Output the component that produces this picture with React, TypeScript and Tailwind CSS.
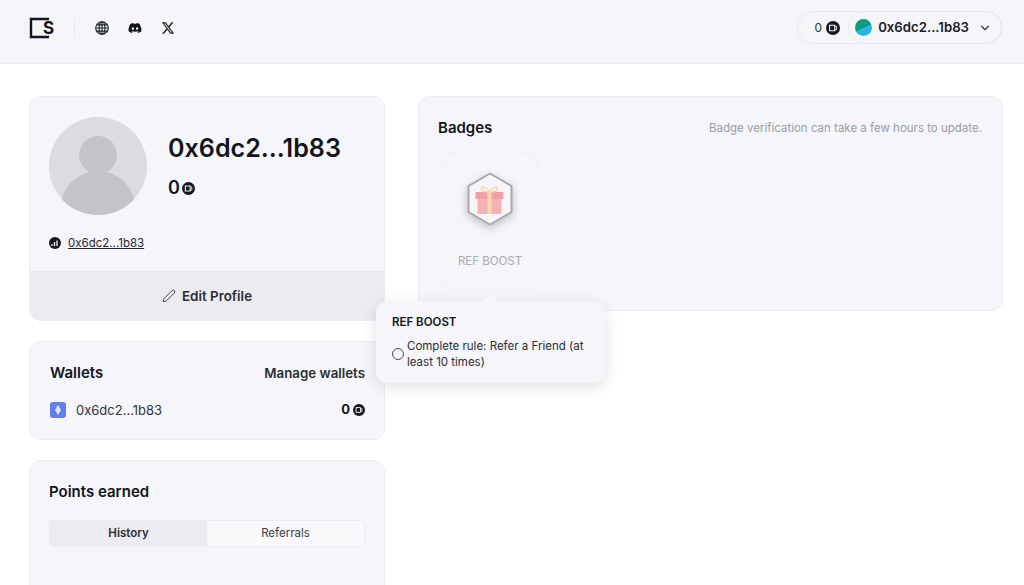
import { Pen, ChevronDown } from 'lucide-react';
import { FaDiscord } from 'react-icons/fa';
import { FaXTwitter } from 'react-icons/fa6';

function PointsIcon({ size = 14 }: { size?: number }) {
    return (
        <svg width={size} height={size} viewBox="0 0 14 14" className="shrink-0">
            <circle cx="7" cy="7" r="7" fill="#16181c" />
            <path d="M3.6 4.2h5.2v5.6H3.6z" fill="none" stroke="#f5f5fa" strokeWidth="1.1" />
            <path d="M8.8 5.4h1.8v3.2H8.8" fill="none" stroke="#f5f5fa" strokeWidth="0.9" />
        </svg>
    );
}

function GlobeIcon() {
    return (
        <svg width="14" height="14" viewBox="0 0 14 14" fill="none" stroke="#1d2125" strokeWidth="1.1">
            <circle cx="7" cy="7" r="6.300" />
            <ellipse cx="7" cy="7" rx="2.900" ry="6.300" />
            <path d="M7 .7v12.600M.7 7h12.600M1.600 3.900h10.800M1.600 10.100h10.800" />
        </svg>
    );
}

function BadgeGraphic() {
    return (
        <svg width="50" height="54" viewBox="0 0 50 54" className="drop-shadow-[0_3px_4px_rgba(0,0,0,0.22)]">
            <path
                d="M25 1.5 46.5 14v26L25 52.5 3.500 40V14z"
                fill="#f6f6fa"
                stroke="#a9a9ad"
                strokeWidth="2"
                strokeLinejoin="round"
            />
            <rect x="10.500" y="20" width="28" height="7" rx="1" fill="#f0a0a4" />
            <rect x="12.500" y="27" width="24" height="15" rx="1" fill="#f4b2b5" />
            <rect x="22.500" y="20" width="4" height="22" fill="#f8d8ac" />
            <path d="M24.500 20c-3-5-7-6-8-4s3 4 8 4zm0 0c3-5 7-6 8-4s-3 4-8 4z" fill="none" stroke="#f7d6a6" strokeWidth="1.500" />
        </svg>
    );
}

export default function App() {
    return (
        <div className="h-[585px] overflow-hidden bg-white font-['Inter',sans-serif] text-[#11151a]">
            <header className="h-16 bg-[#f5f5fa] border-b border-[#ecedf2] flex items-center justify-between pl-[29px] pr-[21px] pb-[8px]">
                <div className="flex items-center">
                    <div className="relative w-[25px] h-[22px]">
                        <svg width="25" height="22" viewBox="0 0 25 22" className="block">
                            <path d="M20 2H2v18h18" fill="none" stroke="#11151a" strokeWidth="2.400" />
                        </svg>
                        <span className="absolute left-[14px] top-[1px] text-[17px] leading-[20px] font-bold">S</span>
                    </div>
                    <div className="w-px h-4 bg-[#e6e7ec] ml-[20px] mr-[20px]" />
                    <div className="flex items-center gap-[19px]">
                        <GlobeIcon />
                        <FaDiscord size={14} color="#11151a" />
                        <FaXTwitter size={14} color="#1d2125" />
                    </div>
                </div>
                <div className="flex items-center h-[33px] rounded-full border border-[#e9eaf0]">
                    <div className="flex items-center gap-1 pl-[17px] pr-[8px] text-[12px] text-[#30343a]">
                        <span>0</span>
                        <PointsIcon />
                    </div>
                    <div className="flex items-center h-[33px] rounded-full border border-[#e9eaf0] pl-[6px] pr-[9px]">
                        <span className="w-[17px] h-[17px] rounded-full bg-[linear-gradient(155deg,#119a7c_50%,#25b8dc_52%)]" />
                        <span className="ml-[6px] text-[13.200px] font-semibold text-[#1d2125]">0x6dc2...1b83</span>
                        <ChevronDown size={14} className="ml-[9px] text-[#30343a]" />
                    </div>
                </div>
            </header>

            <main className="relative flex gap-[33px] pl-[29px] pr-[21px] pt-[32px]">
                <div className="w-[356px] shrink-0 flex flex-col gap-5">
                    <section className="rounded-xl bg-[#f5f5fa] border border-[#ecedf2] overflow-hidden">
                        <div className="px-[19px] pt-5 h-[174px]">
                            <div className="flex gap-[21px]">
                                <div className="w-[98px] h-[98px] rounded-full bg-[#dcdce0] overflow-hidden shrink-0">
                                    <svg width="98" height="98" viewBox="0 0 98 98">
                                        <circle cx="49" cy="38" r="19" fill="#c4c4c8" />
                                        <ellipse cx="49" cy="90" rx="37" ry="36" fill="#c4c4c8" />
                                    </svg>
                                </div>
                                <div className="pt-[13px]">
                                    <div className="text-[25.100px] leading-[36px] font-semibold">0x6dc2...1b83</div>
                                    <div className="mt-[12px] flex items-center gap-[2px] text-[18px] leading-[20px] font-semibold">
                                        <span>0</span>
                                        <PointsIcon size={13} />
                                    </div>
                                </div>
                            </div>
                            <div className="mt-[20px] flex items-center gap-[7px]">
                                <svg width="12" height="12" viewBox="0 0 12 12" className="shrink-0">
                                    <circle cx="6" cy="6" r="6" fill="#16181c" />
                                    <path d="M3 9V7M5.500 9V5M8 9V3.500" stroke="#f5f5fa" strokeWidth="1.300" />
                                </svg>
                                <span className="text-[11.500px] leading-4 underline text-[#24282d]">0x6dc2...1b83</span>
                            </div>
                        </div>
                        <div className="h-[49px] bg-[#ebebf0] border-t border-[#e4e4ea] flex items-center justify-center gap-[6px] text-[#2a2e33]">
                            <Pen size={14} strokeWidth={1.500} />
                            <span className="text-[13.400px] font-semibold">Edit Profile</span>
                        </div>
                    </section>

                    <section className="h-[99px] rounded-xl bg-[#f5f5fa] border border-[#ecedf2] pl-5 pr-[19px] pt-[21px]">
                        <div className="flex items-center justify-between">
                            <h2 className="text-[15px] leading-5 font-semibold">Wallets</h2>
                            <span className="text-[13.300px] leading-5 font-semibold text-[#2a2e33]">Manage wallets</span>
                        </div>
                        <div className="mt-[17px] flex items-center justify-between">
                            <div className="flex items-center gap-[10px]">
                                <div className="w-4 h-4 rounded-[3px] bg-[#627eea] flex items-center justify-center">
                                    <svg width="6" height="10" viewBox="0 0 6 10">
                                        <path d="M3 0 6 5 3 10 0 5z" fill="#dfe4fb" />
                                    </svg>
                                </div>
                                <span className="text-[13px] leading-5 text-[#30343a]">0x6dc2...1b83</span>
                            </div>
                            <div className="flex items-center gap-[3px] text-[13px] font-bold">
                                <span>0</span>
                                <PointsIcon size={12} />
                            </div>
                        </div>
                    </section>

                    <section className="h-[200px] rounded-xl bg-[#f5f5fa] border border-[#ecedf2] px-[19px] pt-[21px]">
                        <h2 className="text-[15px] leading-5 font-semibold">Points earned</h2>
                        <div className="mt-[18px] grid grid-cols-2 h-[27px] rounded-[3px] border border-[#ecedf2] overflow-hidden text-[11.500px]">
                            <div className="bg-[#ebebf0] flex items-center justify-center font-semibold text-[#2a2e33]">History</div>
                            <div className="bg-[#f9f9fc] flex items-center justify-center text-[#3a3e44]">Referrals</div>
                        </div>
                    </section>
                </div>

                <section className="flex-1 h-[215px] rounded-xl bg-[#f5f5fa] border border-[#ecedf2] pl-[19px] pr-5 pt-[21px]">
                    <div className="flex items-center justify-between">
                        <h2 className="text-[15px] leading-5 font-semibold">Badges</h2>
                        <span className="text-[11.500px] leading-5 text-[#9a9ea6]">Badge verification can take a few hours to update.</span>
                    </div>
                    <div className="mt-[14px] ml-[4px] w-[96px] h-[139px] rounded-xl border border-[#f0f0f5] flex flex-col items-center pt-[19px]">
                        <BadgeGraphic />
                        <span className="mt-[27px] text-[11.500px] leading-4 text-[#a9abb1]">REF BOOST</span>
                    </div>
                </section>

                {/* tooltip over the badge card */}
                <div className="absolute left-[376px] top-[237px] w-[229px] h-[82px] rounded-xl bg-[#f5f5fa] shadow-[0_4px_16px_rgba(20,20,40,0.12)] pl-4 pr-3 pt-[13px]">
                    <span className="absolute left-[109px] -top-[5px] w-[10px] h-[10px] rotate-45 bg-[#f5f5fa]" />
                    <div className="text-[11.500px] leading-4 font-semibold">REF BOOST</div>
                    <div className="mt-[8px] flex items-center gap-[3px]">
                        <span className="w-3 h-3 rounded-full border border-[#4a4e54] shrink-0" />
                        <span className="text-[11.500px] leading-4 text-[#2a2e33]">Complete rule: Refer a Friend (at least 10 times)</span>
                    </div>
                </div>
            </main>
        </div>
    );
}
